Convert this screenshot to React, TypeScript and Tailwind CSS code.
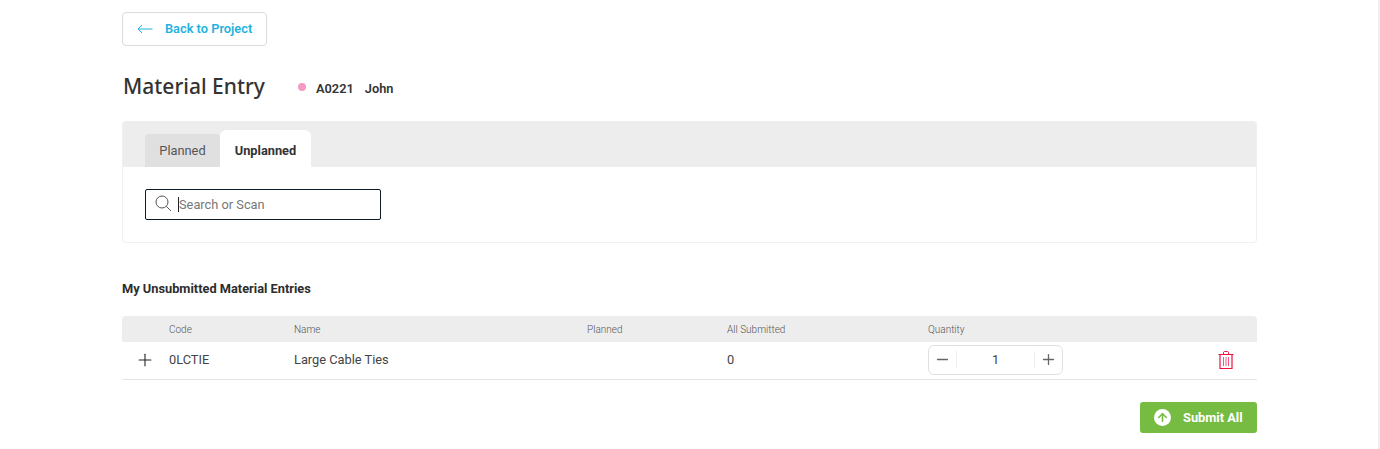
import { ArrowUp, Minus, Plus } from 'lucide-react';

function TrashIcon() {
  return (
    <svg width="16" height="18" viewBox="0 0 16 18" fill="none" stroke="#f0113f" strokeWidth="1">
      <path d="M0.5 3.5H15.5" />
      <path d="M5.5 3.5V1.5C5.5 1 6 0.5 6.5 0.5H9.5C10 0.5 10.5 1 10.5 1.5V3.5" />
      <path d="M2 3.5V17.5H14V3.5" strokeWidth="1.2" />
      <path d="M5.5 6V15M8 6V15M10.5 6V15" strokeWidth="1" stroke="#f7567c" />
    </svg>
  );
}

function SearchIcon() {
  return (
    <svg width="17" height="17" viewBox="0 0 17 17" fill="none" stroke="#555" strokeWidth="1" className="mb-[3px]">
      <circle cx="7" cy="7" r="6" />
      <path d="M11.4 11.4L16 16" />
    </svg>
  );
}

export default function App() {
  return (
    <div className="h-[449px] w-[1380px] overflow-hidden bg-white font-['Roboto',sans-serif] text-[#333]">
      <div className="flex h-full">
        <main className="w-[1378px] pl-[122px] pr-[121px] pt-3">
          <button
            type="button"
            className="flex h-[34px] w-[145px] items-center rounded border border-[#dcdcdc] pl-[14px] text-[12.8px] font-semibold text-[#1fb2e0]"
          >
            <svg width="16" height="10" viewBox="0 0 16 10" fill="none" stroke="#1fb2e0" strokeWidth="1" className="mr-[12px]">
              <path d="M15.5 5H1M5 1L1 5L5 9" />
            </svg>
            Back to Project
          </button>

          <div className="mt-[26px] flex h-[30px] items-center">
            <h1 className="ml-px font-['Noto_Sans',sans-serif] text-[21px] font-medium text-[#333]">Material Entry</h1>
            <span className="ml-[33px] h-2 w-2 rounded-full bg-[#f49ac1]" />
            <span className="ml-[10px] mt-[3px] text-[12.8px] font-semibold">A0221</span>
            <span className="ml-[11px] mt-[3px] text-[12.8px] font-semibold">John</span>
          </div>

          <section className="mt-[19px] h-[122px] rounded border border-t-0 border-[#f0f0f0]">
            <div className="flex h-[46px] items-end rounded-t bg-[#ededed] pl-[22px]">
              <div className="flex h-[33px] w-[75px] items-center justify-center rounded-t bg-[#e0e0e0] text-[12.8px] text-[#555]">
                Planned
              </div>
              <div className="flex h-[37px] w-[91px] items-center justify-center rounded-t-md bg-white pt-[4px] text-[12.8px] font-bold text-[#333]">
                Unplanned
              </div>
            </div>
            <div className="px-[22px] pt-[22px]">
              <div className="flex h-[31px] w-[236px] items-center rounded-[2px] border border-[#0c1c26] pl-[9px]">
                <SearchIcon />
                <span className="ml-[6px] h-[15px] w-px bg-[#222]" />
                <span className="text-[12.8px] text-[#777]">Search or Scan</span>
              </div>
            </div>
          </section>

          <h2 className="mt-[38px] text-[12.8px] font-bold leading-4 text-[#2d2d2d]">My Unsubmitted Material Entries</h2>

          <div className="mt-[19px]">
            <div className="flex h-[26px] items-center rounded-t bg-[#ededed] text-[10px] font-light text-[#555]">
              <div className="w-[47px]" />
              <div className="w-[125px]">Code</div>
              <div className="w-[293px]">Name</div>
              <div className="w-[140px]">Planned</div>
              <div className="w-[201px]">All Submitted</div>
              <div>Quantity</div>
            </div>
            <div className="flex h-[38px] items-center border-b border-[#e5e5e5] pb-[2px] text-[12.8px] text-[#444]">
              <div className="flex w-[47px] pl-[13px]">
                <Plus size={20} strokeWidth={1.3} color="#222" />
              </div>
              <div className="w-[125px]">0LCTIE</div>
              <div className="w-[293px]">Large Cable Ties</div>
              <div className="w-[140px]" />
              <div className="w-[201px]">0</div>
              <div className="flex h-[30px] w-[135px] items-center rounded-md border border-[#e0e0e0]">
                <div className="flex w-[28px] justify-center border-r border-[#eee]">
                  <Minus size={17} strokeWidth={1.8} color="#666" />
                </div>
                <div className="flex-1 text-center">1</div>
                <div className="flex w-[28px] justify-center border-l border-[#eee]">
                  <Plus size={17} strokeWidth={1.8} color="#666" />
                </div>
              </div>
              <div className="ml-[155px]">
                <TrashIcon />
              </div>
            </div>
          </div>

          <div className="mt-[22px] flex justify-end">
            <button
              type="button"
              className="flex h-[31px] w-[117px] items-center rounded-[3px] bg-[#76bc43] pl-[14px] text-[12.8px] font-bold text-white"
            >
              <span className="mr-[12px] flex h-[17px] w-[17px] items-center justify-center rounded-full bg-white">
                <ArrowUp size={13} strokeWidth={3} color="#76bc43" />
              </span>
              Submit All
            </button>
          </div>
        </main>
        <div className="h-full w-[2px] bg-[#efefef]" />
      </div>
    </div>
  );
}
